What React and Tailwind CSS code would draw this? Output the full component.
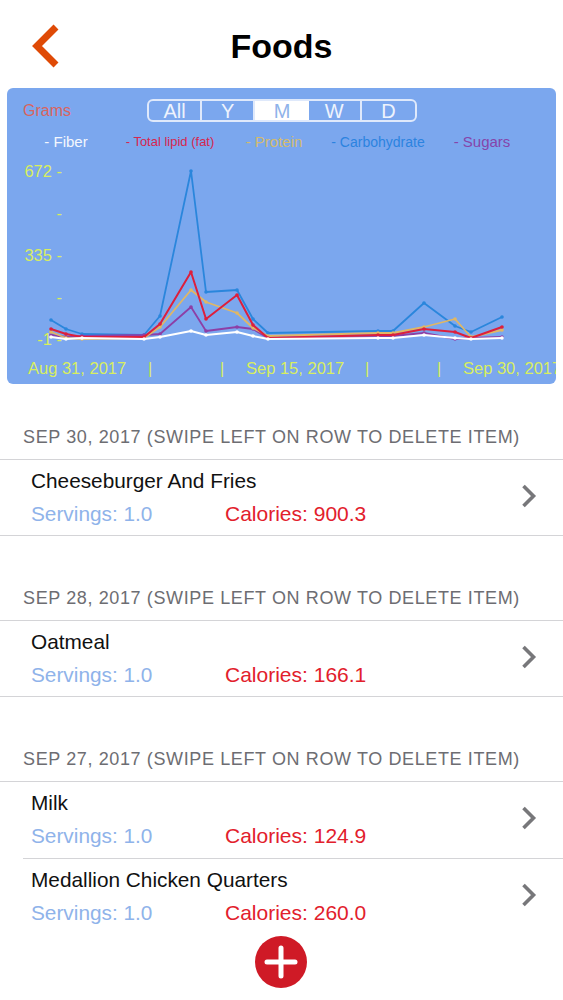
import { Fragment } from 'react'

const xs = [51, 66, 82, 144, 160, 191, 206, 237, 253, 268, 378, 393, 424, 455, 471, 502]

const series = [
  { color: '#2a86dc', width: 1.8, ys: [320, 329, 334, 335, 316, 171, 292, 290, 319, 333, 331, 331, 303, 326, 332, 317] },
  { color: '#8d3fa6', width: 1.8, ys: [335, 337, 336, 335, 334, 307, 331, 327, 329, 338, 337, 336, 333, 339, 338, 337] },
  { color: '#e0b765', width: 1.8, ys: [332, 338, 339, 338, 327, 290, 302, 313, 328, 336, 333, 333, 327, 319, 337, 330] },
  { color: '#dd1f3c', width: 2, ys: [329, 334, 337, 337, 324, 272, 319, 295, 325, 338, 335, 335, 329, 332, 338, 327] },
  { color: '#ffffff', width: 2, ys: [337, 339, 338, 339, 337, 331, 335, 332, 336, 339, 338, 338, 335, 338, 339, 338] },
]

const legend = [
  { label: '- Fiber', cls: 'text-[15px] text-[#f4f7fd]' },
  { label: '- Total lipid (fat)', cls: 'text-[13px] text-[#d8264f]' },
  { label: '- Protein', cls: 'text-[15px] text-[#d3bb6e]' },
  { label: '- Carbohydrate', cls: 'text-[14px] text-[#2b83e0]' },
  { label: '- Sugars', cls: 'text-[15px] text-[#8644aa]' },
]

const sections = [
  {
    date: 'SEP 30, 2017',
    items: [{ name: 'Cheeseburger And Fries', cal: '900.3' }],
  },
  {
    date: 'SEP 28, 2017',
    items: [{ name: 'Oatmeal', cal: '166.1' }],
  },
  {
    date: 'SEP 27, 2017',
    open: true,
    items: [
      { name: 'Milk', cal: '124.9' },
      { name: 'Medallion Chicken Quarters', cal: '260.0' },
    ],
  },
]

function Chart() {
  const yLabels = [
    { t: '672 -', x: 62, y: 177 },
    { t: '-', x: 62, y: 219 },
    { t: '335 -', x: 62, y: 261 },
    { t: '-', x: 62, y: 303 },
    { t: '-1 -', x: 62, y: 345 },
  ]
  const xLabels = [
    { t: 'Aug 31, 2017', x: 28 },
    { t: '|', x: 148 },
    { t: '|', x: 220 },
    { t: 'Sep 15, 2017', x: 246 },
    { t: '|', x: 365 },
    { t: '|', x: 437 },
    { t: 'Sep 30, 2017', x: 463 },
  ]
  return (
    <svg viewBox="7 155 549 229" className="block h-[229px] w-[549px]">
      {yLabels.map((l) => (
        <text key={l.y} x={l.x} y={l.y} textAnchor="end" fontSize="16.5" fill="#d8ee60">
          {l.t}
        </text>
      ))}
      {xLabels.map((l) => (
        <text key={l.x} x={l.x} y={374} fontSize="16.5" fill="#d8ee60">
          {l.t}
        </text>
      ))}
      {series.map((s) => (
        <Fragment key={s.color}>
          <polyline
            points={xs.map((x, i) => `${x},${s.ys[i]}`).join(' ')}
            fill="none"
            stroke={s.color}
            strokeWidth={s.width}
            strokeLinejoin="round"
          />
          {xs.map((x, i) => (
            <circle key={x} cx={x} cy={s.ys[i]} r="1.8" fill={s.color} />
          ))}
        </Fragment>
      ))}
    </svg>
  )
}

function Row({ item, last }) {
  return (
    <div className={`ml-[23px] flex items-start pl-[8px] pr-[26px] ${last ? 'h-[75px]' : 'h-[77px] border-b border-[#d4d4d7]'}`}>
      <div className="flex-1">
        <p className="mt-[9px] text-[20.8px] leading-[24px] text-[#111]">{item.name}</p>
        <div className="mt-[9px] flex leading-[24px]">
          <span className="w-[194px] text-[20.8px] text-[#8fb3ea]">Servings: 1.0</span>
          <span className="text-[21px] text-[#e2202c]">Calories: {item.cal}</span>
        </div>
      </div>
      <svg width="16" height="24" viewBox="0 0 16 24" className="mt-[24px]" fill="none" stroke="#77777a" strokeWidth="3.6" aria-hidden="true">
        <path d="M2.5 2 12.5 12 2.5 22" />
      </svg>
    </div>
  )
}

export default function App() {
  return (
    <div className="relative h-[1000px] w-[563px] overflow-hidden bg-white font-['Liberation_Sans',Arial,sans-serif]">
      {/* nav bar */}
      <div className="relative flex h-[88px] items-center justify-center pt-[4px]">
        <button aria-label="Back" className="absolute left-[31px] top-[23px]">
          <svg width="34" height="46" viewBox="0 0 34 46" fill="none" stroke="#df4a06" strokeWidth="7" aria-hidden="true">
            <path d="M25 4 6 23 25 42" />
          </svg>
        </button>
        <h1 className="text-[34px] font-bold leading-none text-black">Foods</h1>
      </div>

      {/* chart panel */}
      <div className="mx-[7px] h-[296px] w-[549px] overflow-hidden rounded-[6px] bg-[#7ba7ee]">
        <div className="flex h-[42px] items-start pt-[11px]">
          <span className="w-[140px] pl-[16px] text-[16px] leading-[24px] text-[#d9645e]">Grams</span>
          <div className="grid h-[23px] w-[270px] grid-cols-5 overflow-hidden rounded-[6px] border-2 border-[#dfe9fb] text-center text-[20px] leading-[20px] text-[#eef3fd]">
            <span className="border-r-2 border-[#dfe9fb]">All</span>
            <span className="border-r-2 border-[#dfe9fb]">Y</span>
            <span className="bg-white text-[#8fb3ea]">M</span>
            <span className="border-r-2 border-[#dfe9fb]">W</span>
            <span>D</span>
          </div>
        </div>
        <div className="mb-[1px] ml-[7px] grid h-[24px] w-[520px] grid-cols-5 items-center text-center leading-[18px]">
          {legend.map((l) => (
            <span key={l.label} className={l.cls}>{l.label}</span>
          ))}
        </div>
        <Chart />
      </div>

      {/* food list */}
      <div className="pt-[40px]">
        {sections.map((s) => (
          <section key={s.date} className="mb-[49px] last:mb-0">
            <h2 className="px-[23px] pb-[9px] text-[18px] leading-[26px] tracking-[0.62px] text-[#6d6d72]">
              {s.date} (SWIPE LEFT ON ROW TO DELETE ITEM)
            </h2>
            <div className={`border-t border-[#d4d4d7] ${s.open ? '' : 'border-b'}`}>
              {s.items.map((item, i) => (
                <Row key={item.name} item={item} last={i === s.items.length - 1} />
              ))}
            </div>
          </section>
        ))}
      </div>

      {/* add button */}
      <button aria-label="Add food" className="absolute left-[255px] top-[936px] flex h-[52px] w-[52px] items-center justify-center rounded-full bg-[#cf1a26]">
        <svg width="34" height="34" viewBox="0 0 34 34" fill="none" stroke="#fff" strokeWidth="5" strokeLinecap="round" aria-hidden="true">
          <path d="M17 3v28M3 17h28" />
        </svg>
      </button>
    </div>
  )
}
